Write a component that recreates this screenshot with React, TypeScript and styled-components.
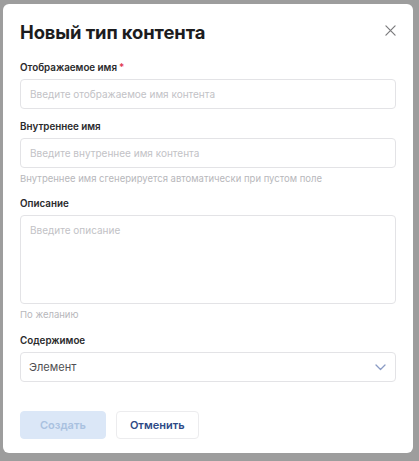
import styled, { createGlobalStyle } from 'styled-components'

const GlobalStyle = createGlobalStyle`
  html, body {
    margin: 0;
    padding: 0;
    background: #9d9d9d;
    font-family: Inter, "Noto Sans", sans-serif;
  }
`

const Overlay = styled.div`
  width: 419px;
  height: 461px;
  padding: 4px 6px 8px 3px;
  box-sizing: border-box;
  background: #9d9d9d;
`

const Dialog = styled.div`
  height: 100%;
  box-sizing: border-box;
  background: #fff;
  border-radius: 6px;
  padding: 17px 17px 0 17px;
  display: flex;
  flex-direction: column;
`

const Header = styled.div`
  display: flex;
  align-items: center;
  justify-content: space-between;
  margin-bottom: 19px;
`

const Title = styled.h2`
  margin: 0;
  font-size: 18.4px;
  font-weight: 700;
  color: #1c1c1e;
  letter-spacing: -0.1px;
`

const CloseButton = styled.button`
  border: none;
  background: none;
  padding: 0;
  margin-right: -2px;
  margin-top: -3px;
  width: 16px;
  height: 16px;
  display: flex;
  align-items: center;
  justify-content: center;
  color: #7a7a7c;
  cursor: pointer;
`

const Field = styled.div<{ $gap?: number }>`
  display: flex;
  flex-direction: column;
  margin-bottom: ${p => p.$gap ?? 13}px;
`

const Label = styled.label`
  font-size: 9.8px;
  font-weight: 600;
  color: #2a2a2c;
  margin-bottom: 6px;
`

const Required = styled.span`
  color: #e0344c;
  margin-left: 2px;
`

const Input = styled.input`
  height: 30px;
  box-sizing: border-box;
  border: 1px solid #e3e3e6;
  border-radius: 4px;
  padding: 0 9px;
  font-family: inherit;
  font-size: 10px;
  color: #333;
  outline: none;
  &::placeholder {
    color: #c2c2c6;
  }
`

const TextArea = styled.textarea`
  height: 89px;
  box-sizing: border-box;
  border: 1px solid #e3e3e6;
  border-radius: 4px;
  padding: 8px 9px;
  font-family: inherit;
  font-size: 10px;
  resize: none;
  outline: none;
  &::placeholder {
    color: #c2c2c6;
  }
`

const Hint = styled.div`
  font-size: 9.5px;
  color: #b7b7bb;
  margin-top: 5px;
`

const Select = styled.div`
  height: 30px;
  box-sizing: border-box;
  border: 1px solid #e3e3e6;
  border-radius: 4px;
  padding: 0 9px 0 8px;
  display: flex;
  align-items: center;
  justify-content: space-between;
  font-size: 11px;
  color: #4f4f52;
`

const Actions = styled.div`
  display: flex;
  gap: 10px;
  margin-top: 10px;
`

const Button = styled.button<{ $primary?: boolean }>`
  height: 28px;
  padding: 0 ${p => (p.$primary ? 19 : 13)}px;
  border-radius: 4px;
  font-family: inherit;
  font-size: 11px;
  font-weight: 600;
  cursor: pointer;
  border: 1px solid ${p => (p.$primary ? '#dbe7f7' : '#ececee')};
  background: ${p => (p.$primary ? '#dbe7f7' : '#fff')};
  color: ${p => (p.$primary ? '#a9c1e0' : '#2e4a86')};
`

export default function App() {
  return (
    <>
      <GlobalStyle />
      <Overlay>
        <Dialog>
          <Header>
            <Title>Новый тип контента</Title>
            <CloseButton aria-label="Закрыть">
              <svg width="11" height="11" viewBox="0 0 12 12" fill="none" stroke="currentColor" strokeWidth="1.3" strokeLinecap="round">
                <path d="M1 1l10 10M11 1L1 11" />
              </svg>
            </CloseButton>
          </Header>

          <Field $gap={12}>
            <Label>
              Отображаемое имя<Required>*</Required>
            </Label>
            <Input placeholder="Введите отображаемое имя контента" />
          </Field>

          <Field $gap={14}>
            <Label>Внутреннее имя</Label>
            <Input placeholder="Введите внутреннее имя контента" />
            <Hint>Внутреннее имя сгенерируется автоматически при пустом поле</Hint>
          </Field>

          <Field $gap={15}>
            <Label>Описание</Label>
            <TextArea placeholder="Введите описание" />
            <Hint>По желанию</Hint>
          </Field>

          <Field $gap={19}>
            <Label>Содержимое</Label>
            <Select>
              <span>Элемент</span>
              <svg width="11" height="7" viewBox="0 0 11 7" fill="none" stroke="#8a9bc4" strokeWidth="1.3" strokeLinecap="round" strokeLinejoin="round">
                <path d="M1 1l4.5 4.5L10 1" />
              </svg>
            </Select>
          </Field>

          <Actions>
            <Button $primary disabled>Создать</Button>
            <Button>Отменить</Button>
          </Actions>
        </Dialog>
      </Overlay>
    </>
  )
}
